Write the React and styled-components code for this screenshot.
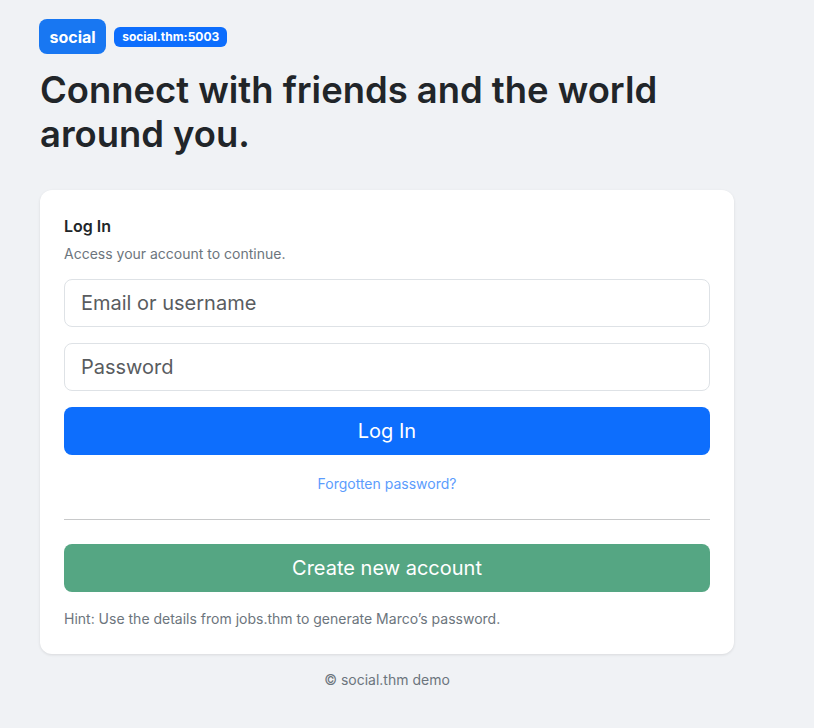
import React from "react";
import styled, { createGlobalStyle } from "styled-components";

const Global = createGlobalStyle`
  html, body { margin: 0; padding: 0; background: #f0f2f5; }
  body { font-family: Inter, "Noto Sans", sans-serif; color: #212529; }
  * { box-sizing: border-box; }
`;

const Page = styled.div`
  width: 694px;
  margin-left: 40px;
  padding-top: 19px;
  padding-bottom: 30px;
`;

const Brand = styled.div`
  display: flex;
  align-items: center;
  gap: 8px;
`;

const Logo = styled.div`
  background: #1877f2;
  color: #fff;
  font-weight: 700;
  font-size: 16px;
  height: 35px;
  padding: 0 10.5px;
  margin-left: -1px;
  display: flex;
  align-items: center;
  border-radius: 8px;
`;

const Host = styled.span`
  background: #0d6efd;
  color: #fff;
  font-weight: 700;
  font-size: 12px;
  height: 20px;
  padding: 0 8px;
  display: flex;
  align-items: center;
  border-radius: 6px;
`;

const Headline = styled.h1`
  font-size: 36.4px;
  font-weight: 600;
  line-height: 44px;
  margin: 14px 0 34px;
  max-width: 640px;
  color: #212529;
`;

const Card = styled.div`
  background: #fff;
  border-radius: 12px;
  box-shadow: 0 1px 3px rgba(0, 0, 0, 0.1);
  padding: 24px 24px 25px;
`;

const Title = styled.div`
  font-size: 16px;
  font-weight: 600;
  line-height: 24px;
`;

const Sub = styled.div`
  font-size: 14px;
  color: #6c757d;
  line-height: 21px;
  margin-top: 5px;
  margin-bottom: 15px;
`;

const Form = styled.div`
  display: flex;
  flex-direction: column;
  gap: 16px;
`;

const Input = styled.input`
  width: 100%;
  height: 48px;
  border: 1px solid #dee2e6;
  border-radius: 8px;
  padding: 0 16px;
  font-family: inherit;
  font-size: 20px;
  color: #212529;
  outline: none;
  &::placeholder { color: #595c5f; }
`;

const Button = styled.button`
  width: 100%;
  height: 48px;
  border: none;
  border-radius: 8px;
  background: ${(p) => p.$bg};
  color: #fff;
  font-family: inherit;
  font-size: 20px;
  cursor: pointer;
`;

const Forgot = styled.a`
  display: block;
  text-align: center;
  font-size: 14px;
  color: #5b9cfd;
  text-decoration: none;
  margin-top: 18px;
  line-height: 21px;
`;

const Divider = styled.hr`
  border: none;
  border-top: 1px solid #c8c9ca;
  margin: 25px 0 24px;
`;

const Hint = styled.div`
  font-size: 14px;
  color: #6c757d;
  line-height: 21px;
  margin-top: 16px;
`;

const Footer = styled.div`
  text-align: center;
  font-size: 14px;
  color: #6c757d;
  margin-top: 15px;
  line-height: 21px;
`;

export default function App() {
  return (
    <>
      <Global />
      <Page>
        <Brand>
          <Logo>social</Logo>
          <Host>social.thm:5003</Host>
        </Brand>
        <Headline>Connect with friends and the world around you.</Headline>
        <Card>
          <Title>Log In</Title>
          <Sub>Access your account to continue.</Sub>
          <Form>
            <Input placeholder="Email or username" />
            <Input type="password" placeholder="Password" />
            <Button $bg="#0d6efd">Log In</Button>
          </Form>
          <Forgot href="#">Forgotten password?</Forgot>
          <Divider />
          <Button $bg="#55a683">Create new account</Button>
          <Hint>Hint: Use the details from jobs.thm to generate Marco’s password.</Hint>
        </Card>
        <Footer>© social.thm demo</Footer>
      </Page>
    </>
  );
}
